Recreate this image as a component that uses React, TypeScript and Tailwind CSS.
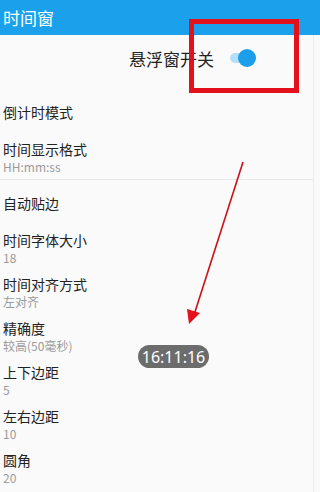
import React from "react";

const font = { fontFamily: '"Noto Sans CJK SC", "Noto Sans", sans-serif' };

function Single({ title }: { title: string }) {
  return (
    <div className="h-[46px] flex items-center pl-[3px]">
      <span className="text-[14px] leading-[18px] text-[#222]">{title}</span>
    </div>
  );
}

function Double({ title, sub }: { title: string; sub: string }) {
  return (
    <div className="h-[44px] pt-[5px] pl-[3px] flex flex-col">
      <span className="text-[14px] leading-[18px] text-[#222]">{title}</span>
      <span className="text-[12px] leading-[17px] text-[#9a9a9a]">{sub}</span>
    </div>
  );
}

export default function App() {
  return (
    <div className="relative w-[320px] h-[492px] overflow-hidden bg-[#fafafa]" style={font}>
      <div className="h-[35px] bg-[#1ba1ec] flex items-center pl-[3px]">
        <span className="text-[17px] text-white leading-none">时间窗</span>
      </div>
      <div className="w-[314px] border-r border-[#ededed] h-[457px]">
        <div className="h-[46px] flex items-center gap-[16px] pl-[129px]">
          <span className="text-[17px] text-[#222] leading-none">悬浮窗开关</span>
          <div className="relative w-[26px] h-[18px] flex items-center">
            <div className="w-[22px] h-[10px] rounded-full bg-[#b5def8]" />
            <div className="absolute right-0 top-0 w-[18px] h-[18px] rounded-full bg-[#1b9fea]" />
          </div>
        </div>
        <div className="h-[8px]" />
        <Single title="倒计时模式" />
        <Double title="时间显示格式" sub="HH:mm:ss" />
        <div className="h-px bg-[#e8e8e8]" />
        <Single title="自动贴边" />
        <Double title="时间字体大小" sub="18" />
        <Double title="时间对齐方式" sub="左对齐" />
        <Double title="精确度" sub="较高(50毫秒)" />
        <Double title="上下边距" sub="5" />
        <Double title="左右边距" sub="10" />
        <Double title="圆角" sub="20" />
      </div>

      {/* red highlight box */}
      <div className="absolute left-[189px] top-[19px] w-[110px] h-[74px] border-[5px] border-[#e3111b]" />

      {/* arrow */}
      <svg className="absolute left-0 top-0" width="320" height="492" viewBox="0 0 320 492">
        <line x1="243" y1="162" x2="194" y2="315" stroke="#c8121c" strokeWidth="1.6" />
        <polygon points="189,324 187,309 200,313" fill="#e3111b" />
      </svg>

      {/* floating time window */}
      <div className="absolute left-[138px] top-[345px] w-[71px] h-[23px] rounded-full bg-[#6c6c6c] flex items-center justify-center">
        <span className="text-white text-[16px] leading-none" style={{ fontFamily: '"Noto Sans", Roboto, sans-serif' }}>
          16:11:16
        </span>
      </div>
    </div>
  );
}
